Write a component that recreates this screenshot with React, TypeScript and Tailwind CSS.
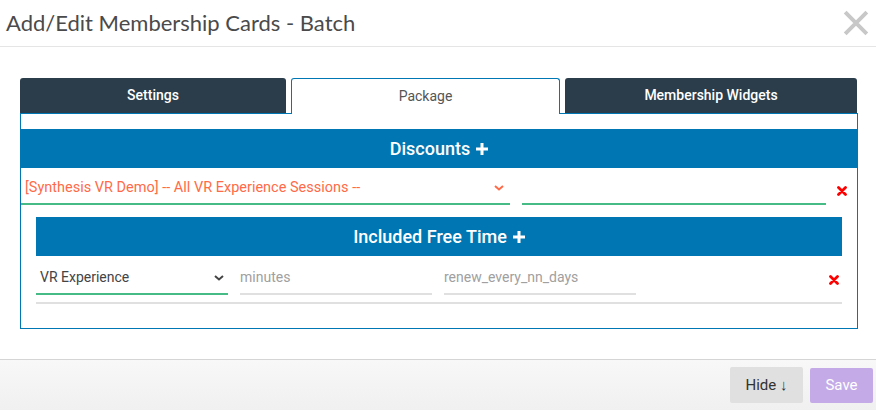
import React from 'react';

function Chevron({ className }: { className: string }) {
  return (
    <svg viewBox="0 0 10 6" className={className} fill="none" stroke="currentColor" strokeWidth="2">
      <path d="M1 1l4 3.5L9 1" />
    </svg>
  );
}

function RedX() {
  return (
    <svg viewBox="0 0 10 10" className="h-[10px] w-[10px] text-[#ff0000]" stroke="currentColor" strokeWidth="2.8" strokeLinecap="round">
      <path d="M1.5 1.5l7 7M8.5 1.5l-7 7" />
    </svg>
  );
}

function Plus() {
  return (
    <svg viewBox="0 0 12 12" className="ml-[6px] h-[12px] w-[12px]" fill="white">
      <path d="M4.5 0h3v4.5H12v3H7.5V12h-3V7.5H0v-3h4.5z" />
    </svg>
  );
}

export default function App() {
  return (
    <div className="flex h-[410px] w-[876px] flex-col bg-white font-['Roboto',sans-serif]">
      <div className="flex h-[47px] items-center justify-between border-b border-[#e5e5e5] pl-[6px] pr-[7px]">
        <h1 className="font-['Lato',sans-serif] text-[22px] leading-none text-[#4a4a4a]">Add/Edit Membership Cards - Batch</h1>
        <svg viewBox="0 0 24 24" className="h-[26px] w-[26px] text-[#c8c8c8]" stroke="currentColor" strokeWidth="3.6">
          <path d="M2 2l20 20M22 2L2 22" />
        </svg>
      </div>

      <div className="flex-1 pl-[20px] pr-[18px] pt-[30px]">
        <div className="flex h-[36px] items-end gap-[5px]">
          <div className="flex h-[35px] w-[266px] items-center justify-center rounded-t-[3px] bg-[#2b3d4b] text-[14px] font-medium text-white">
            Settings
          </div>
          <div className="relative z-10 -mb-px flex h-[36px] w-[269px] items-center justify-center rounded-t-[3px] border border-b-0 border-[#0077b5] bg-white text-[14px] text-[#555]">
            Package
          </div>
          <div className="flex h-[35px] w-[292px] items-center justify-center rounded-t-[3px] bg-[#2b3d4b] text-[14px] font-medium text-white">
            Membership Widgets
          </div>
        </div>
        <div className="border border-[#0077b5] pt-[15px] pb-[24px]">
          <div className="flex h-[39px] items-center justify-center bg-[#0077b3] text-[18px] font-medium text-white">
            Discounts
            <Plus />
          </div>
          <div className="flex h-[37px] items-end">
            <div className="flex w-[489px] items-center justify-between border-b-2 border-[#46bb85] pb-[4px] pl-[4px] pr-[6px]">
              <span className="text-[14.5px] text-[#ff6b48]">[Synthesis VR Demo] -- All VR Experience Sessions --</span>
              <Chevron className="h-[6px] w-[10px] text-[#ff6b48]" />
            </div>
            <div className="ml-[12px] w-[304px] border-b-2 border-[#46bb85]" />
            <div className="mb-[9px] ml-[11px]">
              <RedX />
            </div>
          </div>
          <div className="mx-[15px] mt-[12px]">
            <div className="flex h-[39px] items-center justify-center bg-[#0077b3] text-[18px] font-medium text-white">
              Included Free Time
              <Plus />
            </div>
            <div className="flex h-[48px] items-end border-b-2 border-[#e0e0e0] pb-[7px]">
              <div className="flex w-[192px] items-center justify-between border-b-2 border-[#46bb85] pb-[5px] pl-[4px] pr-[4px]">
                <span className="text-[14px] text-[#444]">VR Experience</span>
                <Chevron className="h-[6px] w-[10px] text-[#444]" />
              </div>
              <div className="ml-[12px] w-[192px] border-b-2 border-[#e0e0e0] pb-[5px] text-[14px] text-[#a0a0a0]">minutes</div>
              <div className="ml-[12px] w-[192px] border-b-2 border-[#e0e0e0] pb-[5px] text-[14px] text-[#a0a0a0]">renew_every_nn_days</div>
              <div className="mb-[10px] ml-auto mr-[3px]">
                <RedX />
              </div>
            </div>
          </div>
        </div>
      </div>

      <div className="flex h-[51px] items-center justify-end gap-[7px] border-t border-[#d5d5d5] bg-gradient-to-b from-[#f8f8f8] to-[#f0f0f0] pr-[3px]">
        <button className="flex h-[36px] w-[73px] items-center justify-center rounded-[2px] bg-[#e0e0e0] text-[15px] text-[#333]">
          Hide ↓
        </button>
        <button className="flex h-[35px] w-[63px] items-center justify-center rounded-[2px] bg-[#c4abe8] text-[15px] text-white">
          Save
        </button>
      </div>
    </div>
  );
}
